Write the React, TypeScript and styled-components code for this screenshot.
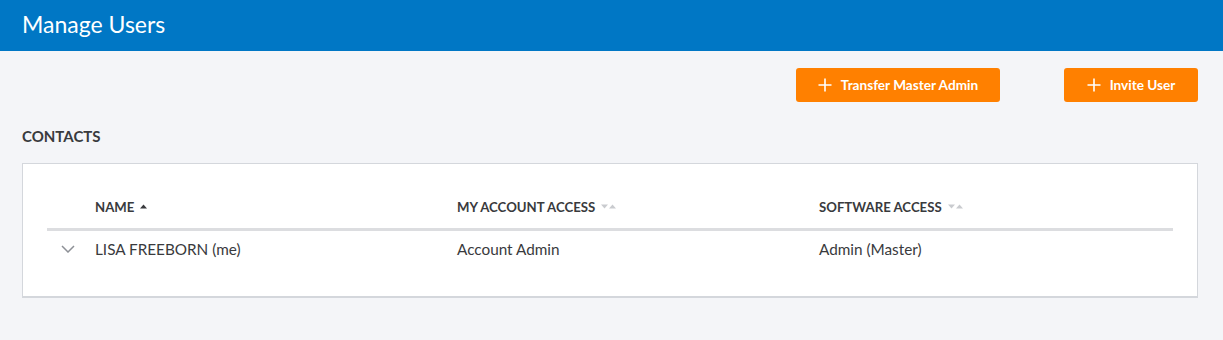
import React from "react";
import styled, { createGlobalStyle } from "styled-components";

const GlobalStyle = createGlobalStyle`
  html, body {
    margin: 0;
    padding: 0;
    background: #f4f5f8;
    font-family: "Lato", "Liberation Sans", sans-serif;
  }
`;

const Page = styled.div`
  width: 1223px;
  min-height: 340px;
  background: #f4f5f8;
`;

const TopBar = styled.header`
  height: 51px;
  background: #0077c5;
  display: flex;
  align-items: center;
  padding: 0 22px;
  box-sizing: border-box;
`;

const PageTitle = styled.h1`
  margin: 0 0 4px;
  font-size: 23px;
  font-weight: 400;
  color: #ffffff;
`;

const Content = styled.main`
  padding: 17px 25px 0 22px;
`;

const Actions = styled.div`
  display: flex;
  justify-content: flex-end;
  gap: 64px;
`;

const ActionButton = styled.button<{ $width: number }>`
  width: ${(p) => p.$width}px;
  height: 34px;
  border: none;
  border-radius: 3px;
  background: #ff8000;
  color: #ffffff;
  font-family: "Lato", "Liberation Sans", sans-serif;
  font-size: 13.6px;
  font-weight: 700;
  display: flex;
  align-items: center;
  justify-content: center;
  gap: 9px;
  padding: 0 0 1px;
  cursor: pointer;
`;

const SectionLabel = styled.h2`
  margin: 25px 0 18px;
  font-size: 15px;
  font-weight: 700;
  color: #393a3d;
  line-height: 18px;
`;

const Card = styled.section`
  background: #ffffff;
  border: 1px solid #d4d7dc;
  border-bottom: 2px solid #d4d7dc;
  padding: 26px 24px 29px;
`;

const HeadRow = styled.div`
  display: grid;
  grid-template-columns: 48px 362px 362px 1fr;
  align-items: center;
  height: 41px;
  box-sizing: border-box;
  padding-bottom: 5px;
  border-bottom: 3px solid #dcdde0;
`;

const BodyRow = styled.div`
  display: grid;
  grid-template-columns: 48px 362px 362px 1fr;
  align-items: center;
  height: 36px;
`;

const HeadCell = styled.div`
  font-size: 13.2px;
  font-weight: 700;
  color: #393a3d;
  display: flex;
  align-items: center;
  gap: 6px;
`;

const Cell = styled.div`
  font-size: 15.3px;
  color: #393a3d;
`;

const ToggleCell = styled.div`
  display: flex;
  align-items: center;
  padding-left: 14px;
`;

const SortArrows = styled.span`
  display: inline-flex;
  align-items: center;
  gap: 1px;
`;

const Plus = () => (
  <svg width="14" height="14" viewBox="0 0 14 14">
    <path d="M7 0.5v13M0.5 7h13" stroke="#fff" strokeWidth="1.6" />
  </svg>
);

const Chevron = () => (
  <svg width="14" height="8" viewBox="0 0 14 8">
    <path d="M1 1l6 6 6-6" fill="none" stroke="#8d9096" strokeWidth="1.5" />
  </svg>
);

const SortUp = ({ color }: { color: string }) => (
  <svg width="7" height="5" viewBox="0 0 7 5">
    <path d="M0 4.5L3.5 0.5 7 4.5z" fill={color} />
  </svg>
);

const SortDown = ({ color }: { color: string }) => (
  <svg width="7" height="5" viewBox="0 0 7 5">
    <path d="M0 0.5L3.5 4.5 7 0.5z" fill={color} />
  </svg>
);

const SortIcon: React.FC<{ active?: boolean }> = ({ active }) =>
  active ? (
    <SortArrows>
      <SortUp color="#393a3d" />
    </SortArrows>
  ) : (
    <SortArrows>
      <SortDown color="#c9cbcf" />
      <SortUp color="#c9cbcf" />
    </SortArrows>
  );

const users = [
  { name: "LISA FREEBORN (me)", account: "Account Admin", software: "Admin (Master)" },
];

const App: React.FC = () => {
  return (
    <Page>
      <GlobalStyle />
      <TopBar>
        <PageTitle>Manage Users</PageTitle>
      </TopBar>
      <Content>
        <Actions>
          <ActionButton $width={204}>
            <Plus />
            Transfer Master Admin
          </ActionButton>
          <ActionButton $width={134}>
            <Plus />
            Invite User
          </ActionButton>
        </Actions>
        <SectionLabel>CONTACTS</SectionLabel>
        <Card>
          <HeadRow>
            <div />
            <HeadCell>
              NAME <SortIcon active />
            </HeadCell>
            <HeadCell>
              MY ACCOUNT ACCESS <SortIcon />
            </HeadCell>
            <HeadCell>
              SOFTWARE ACCESS <SortIcon />
            </HeadCell>
          </HeadRow>
          {users.map((u, i) => (
            <BodyRow key={i}>
              <ToggleCell>
                <Chevron />
              </ToggleCell>
              <Cell>{u.name}</Cell>
              <Cell>{u.account}</Cell>
              <Cell>{u.software}</Cell>
            </BodyRow>
          ))}
        </Card>
      </Content>
    </Page>
  );
};

export default App;
